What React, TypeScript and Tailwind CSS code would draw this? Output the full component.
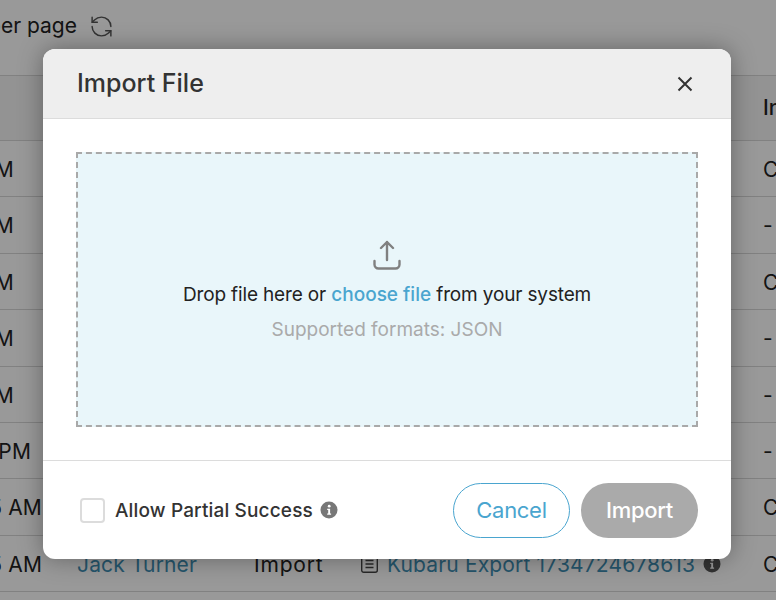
import { RefreshCcw } from 'lucide-react';

const rows = [
  { time: '12/20/2024, 10:15 AM', pad: 'pr-[63px]', status: 'Completed' },
  { time: '12/20/2024, 10:12 AM', pad: 'pr-[63px]', status: '-' },
  { time: '12/20/2024, 10:09 AM', pad: 'pr-[63px]', status: 'Completed' },
  { time: '12/20/2024, 10:02 AM', pad: 'pr-[63px]', status: '-' },
  { time: '12/20/2024, 9:58 AM', pad: 'pr-[63px]', status: '-' },
  { time: '12/20/2024, 9:41 PM', pad: 'pr-[46px]', status: '-' },
  { time: '12/20/2024, 8:35 AM', pad: 'pr-[35px]', status: 'Completed' },
  { time: '12/20/2024, 8:25 AM', pad: 'pr-[35px]', status: 'Completed' },
  { time: '12/20/2024, 8:15 AM', pad: 'pr-[35px]', status: 'Completed' },
];

function InfoIcon({ className }: { className?: string }) {
  return (
    <svg viewBox="0 0 18 18" className={className}>
      <circle cx="9" cy="9" r="8.5" fill="currentColor" />
      <circle cx="9.2" cy="5.2" r="1.4" fill="#fff" />
      <path d="M7.2 7.8h2.9v4.6h1v1.3H7.2v-1.3h1v-3.3h-1z" fill="#fff" />
    </svg>
  );
}

function FileIcon() {
  return (
    <svg viewBox="0 0 19 20" className="w-[19px] h-[20px] shrink-0 text-[#444]" fill="none" stroke="currentColor" strokeWidth="1.4">
      <rect x="1.7" y="1.7" width="15.6" height="16.6" rx="2" />
      <path d="M5.5 6.5h8M5.5 10h8M5.5 13.5h8" />
    </svg>
  );
}

function TableRow({ time, pad, status }: { time: string; pad: string; status: string }) {
  return (
    <div className="flex items-center h-[56.4px] pt-[2px] border-b border-[#d8d8d8] text-[21px] tracking-[0.15px] text-[#222]">
      <div className={`w-[77px] shrink-0 flex justify-end overflow-hidden whitespace-nowrap ${pad}`}>
        <span>{time}</span>
      </div>
      <div className="w-[177px] shrink-0 text-[#3f8fb5] whitespace-nowrap">Jack Turner</div>
      <div className="w-[106px] shrink-0 tracking-[0.8px]">Import</div>
      <div className="w-[403px] shrink-0 flex items-center gap-[8px] whitespace-nowrap">
        <FileIcon />
        <span className="text-[#3f8fb5]">Kubaru Export 1734724678613</span>
        <InfoIcon className="w-[18px] h-[18px] text-[#555] shrink-0" />
      </div>
      <div className="shrink-0 whitespace-nowrap">{status}</div>
    </div>
  );
}

export default function App() {
  return (
    <div className="relative w-[776px] h-[600px] overflow-hidden bg-white font-['Inter','Liberation_Sans',sans-serif]">
      {/* page behind the dialog */}
      <div className="flex items-center justify-end w-[114px] h-[75px] pb-[23px] gap-[12px] text-[21px] text-[#222] overflow-hidden whitespace-nowrap">
        <span>Items per page</span>
        <RefreshCcw className="w-[25px] h-[25px] shrink-0 text-[#555]" strokeWidth={1.4} />
      </div>
      <div className="overflow-hidden">
        <div className="flex items-center justify-end h-[66px] border-y border-[#d8d8d8] bg-[#f5f5f5] text-[21px] font-medium text-[#222]">
          <div className="w-[13px] overflow-hidden whitespace-nowrap">Info</div>
        </div>
        {rows.map(r => (
          <TableRow key={r.time} {...r} />
        ))}
      </div>

      {/* dialog */}
      <div className="absolute inset-0 bg-black/40 pl-[43px] pt-[49px]">
        <div className="w-[688px] h-[510px] flex flex-col rounded-[12px] bg-white overflow-hidden shadow-[0_0_24px_rgba(0,0,0,0.35)]">
          <div className="flex items-center justify-between h-[70px] shrink-0 pl-[34px] pr-[38px] bg-[#eeeeee] border-b border-[#dcdcdc]">
            <h2 className="pt-[1px] text-[25px] font-medium text-[#333]">Import File</h2>
            <svg viewBox="0 0 16 16" className="w-[16px] h-[16px] text-[#333]" fill="none" stroke="currentColor" strokeWidth="2">
              <path d="M1.5 1.5l13 13M14.5 1.5l-13 13" />
            </svg>
          </div>

          <div className="flex-1 px-[33px] py-[33px]">
            <div className="h-full flex flex-col items-center justify-center pt-[3px] border-2 border-dashed border-[#a9a9a9] bg-[#e9f6fa]">
              <svg viewBox="0 0 28 30" className="w-[28px] h-[30px] text-[#808080]" fill="none" stroke="currentColor" strokeWidth="2.4" strokeLinecap="round" strokeLinejoin="round">
                <path d="M14 20V2M8 8l6-6 6 6" />
                <path d="M1.5 21v3.5a4 4 0 0 0 4 4h17a4 4 0 0 0 4-4V21" />
              </svg>
              <p className="mt-[11px] text-[19px] leading-[27px] text-[#222] tracking-[-0.15px] whitespace-nowrap">
                Drop file here or <span className="font-medium text-[#4aa5cf] tracking-[0px]">choose file</span> from your system
              </p>
              <p className="mt-[8px] text-[19px] leading-[27px] text-[#aaaaaa]">Supported formats: JSON</p>
            </div>
          </div>

          <div className="flex items-center justify-between h-[99px] shrink-0 pl-[37px] pr-[33px] border-t border-[#dcdcdc]">
            <div className="flex items-center">
              <div className="w-[25px] h-[25px] rounded-[4px] border-2 border-[#dcdcdc] bg-white" />
              <span className="ml-[10px] pt-[3px] text-[19px] font-medium text-[#333] tracking-[0.15px] whitespace-nowrap">Allow Partial Success</span>
              <InfoIcon className="ml-[7px] w-[18px] h-[18px] text-[#777]" />
            </div>
            <div className="flex items-center gap-[11px]">
              <button className="w-[117px] h-[55px] rounded-full border border-[#4aa5cf] bg-white text-[22px] text-[#4aa5cf] tracking-[-0.3px]">Cancel</button>
              <button className="w-[117px] h-[55px] rounded-full bg-[#aaaaaa] text-[22px] font-medium text-white tracking-[-0.3px]">Import</button>
            </div>
          </div>
        </div>
      </div>
    </div>
  );
}
